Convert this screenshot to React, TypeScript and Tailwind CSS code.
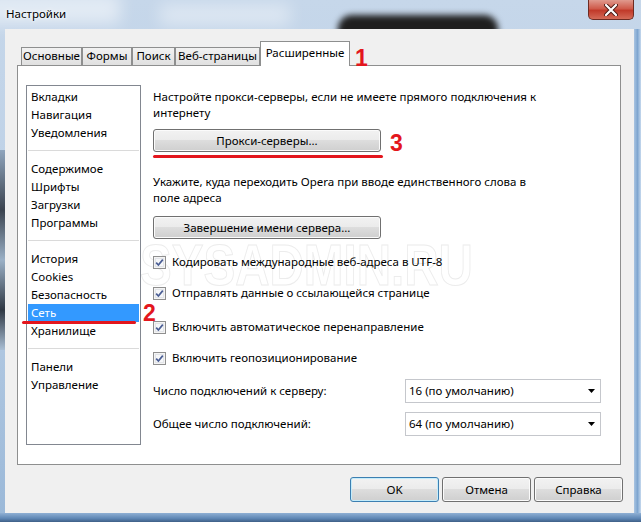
import React from "react"

const groups = [
  ["Вкладки", "Навигация", "Уведомления"],
  ["Содержимое", "Шрифты", "Загрузки", "Программы"],
  ["История", "Cookies", "Безопасность", "Сеть", "Хранилище"],
  ["Панели", "Управление"],
]

const tabs = [
  { label: "Основные", w: "w-[61px]" },
  { label: "Формы", w: "w-[50px]" },
  { label: "Поиск", w: "w-[43px]" },
  { label: "Веб-страницы", w: "w-[85px]" },
]

const checks = [
  { label: "Кодировать международные веб-адреса в UTF-8", mt: "mt-[15px]" },
  { label: "Отправлять данные о ссылающейся странице", mt: "mt-[15px]" },
  { label: "Включить автоматическое перенаправление", mt: "mt-[18px]" },
  { label: "Включить геопозиционирование", mt: "mt-[15px]" },
]

const winBtn =
  "flex items-center justify-center rounded-[3px] border bg-[linear-gradient(180deg,#f2f2f2_0%,#ebebeb_49%,#dddddd_50%,#cfcfcf_100%)]"

function CheckBox() {
  return (
    <svg width="13" height="13" viewBox="0 0 13 13" className="shrink-0">
      <rect x="0.5" y="0.5" width="12" height="12" fill="#f4f4f4" stroke="#8f8f8f" />
      <rect x="2" y="2" width="9" height="9" fill="#e2e4e8" />
      <rect x="3" y="3" width="7" height="7" fill="#f6f7f9" />
      <path d="M3.2 6.6 L5.4 9 L9.8 3.6" fill="none" stroke="#4a5d94" strokeWidth="1.7" />
    </svg>
  )
}

function Select({ value }: { value: string }) {
  return (
    <div className="flex h-[24px] w-[196px] items-center justify-between border border-[#c5c7cc] bg-white pl-[3px] pr-[4px]">
      <span>{value}</span>
      <svg width="8" height="5" viewBox="0 0 8 5">
        <path d="M0 0 H7 L3.5 4 Z" fill="#000" />
      </svg>
    </div>
  )
}

export default function App() {
  return (
    <div className="relative flex h-[522px] w-[641px] flex-col overflow-hidden bg-[linear-gradient(180deg,#c6d7ea_0%,#bcd0e6_45%,#9ab8d8_100%)] font-['Segoe_UI','Noto_Sans',sans-serif] text-[11.5px] text-black">
      {/* glass backdrop */}
      <div className="absolute left-[-20px] top-[-6px] h-[30px] w-[140px] bg-white/50 blur-[8px]" />
      <div className="absolute left-[160px] top-[4px] h-[22px] w-[130px] bg-white/40 blur-[8px]" />
      <div className="absolute left-[338px] top-[15px] h-[40px] w-[160px] rounded-[14px] bg-[#1f1f1f] blur-[3px]" />
      <div className="absolute left-[0px] top-[150px] h-[200px] w-[5px] bg-[linear-gradient(180deg,#8fa5bd,#3a434f_30%,#9ab0c6_55%,#2f3844_80%,#a9bed4)]" />

      {/* title bar */}
      <div className="relative flex h-[29px] shrink-0 items-center pl-[6px] pb-[1px]">
        <span className="[text-shadow:0_0_6px_#fff,0_0_3px_#fff]">Настройки</span>
        <div className="absolute right-[7px] top-0 flex h-[20px] w-[46px] items-center justify-center rounded-b-[5px] border border-t-0 border-[#6e2b22] bg-[linear-gradient(180deg,#e09a8e_0%,#cf5b4b_45%,#c13a2a_55%,#d46a57_100%)]">
          <svg width="14" height="12" viewBox="0 0 14 12">
            <path d="M2 1 L12 11 M12 1 L2 11" stroke="#4a1a14" strokeWidth="4" strokeLinecap="round" />
            <path d="M2 1 L12 11 M12 1 L2 11" stroke="#fff" strokeWidth="2.2" strokeLinecap="round" />
          </svg>
        </div>
      </div>

      <div className="relative flex flex-1">
        <div className="w-[5px]" />
        {/* client area */}
        <div className="flex h-[484px] w-[629px] flex-col bg-[#f0f0f0] pl-[12px] pt-[12px]">
          {/* tabs */}
          <div className="flex h-[24px] items-end pl-[4px]">
            {tabs.map((t) => (
              <div
                key={t.label}
                className={`${t.w} flex h-[18px] items-center justify-center border border-b-0 border-[#8e8f8f] bg-[linear-gradient(180deg,#f2f2f2,#e0e0e0)] pb-[1px]`}
              >
                {t.label}
              </div>
            ))}
            <div className="relative z-10 -mb-[1px] flex h-[25px] w-[90px] items-center justify-center border border-b-0 border-[#8e8f8f] bg-white pb-[2px]">
              Расширенные
            </div>
          </div>

          {/* tab panel */}
          <div className="relative flex h-[400px] w-[604px] border border-[#8e8f8f] bg-white pl-[8px] pt-[19px]">
            <div className="pointer-events-none absolute left-[122px] top-[170px] origin-left scale-x-[0.82] font-['Liberation_Sans',sans-serif] text-[58px] font-bold leading-none text-white [-webkit-text-stroke:1px_#ececec]">
              SYSADMIN.RU
            </div>

            {/* list */}
            <div className="relative h-[360px] w-[115px] shrink-0 border border-[#828790] bg-white pt-[2px]">
              {groups.map((g, gi) => (
                <div key={gi}>
                  {gi > 0 && <div className="mx-[1px] mb-[9px] mt-[8px] h-px bg-[#dadada]" />}
                  {g.map((item) =>
                    item === "Сеть" ? (
                      <div key={item} className="mx-[1px] h-[18px] bg-[#3399ff] pl-[3px] leading-[18px] text-white">
                        {item}
                      </div>
                    ) : (
                      <div key={item} className="h-[18px] pl-[4px] leading-[18px]">
                        {item}
                      </div>
                    )
                  )}
                </div>
              ))}
            </div>

            {/* settings column */}
            <div className="relative ml-[12px] flex w-[448px] flex-col pt-[4px]">
              <p className="leading-[16px]">
                Настройте прокси-серверы, если не имеете прямого подключения к
                <br />
                интернету
              </p>
              <div className={`${winBtn} mt-[8px] h-[23px] w-[228px] border-[#707070] shadow-[inset_0_0_0_1px_#fbfbfb]`}>
                Прокси-серверы...
              </div>
              <p className="mt-[22px] leading-[16px]">
                Укажите, куда переходить Opera при вводе единственного слова в
                <br />
                поле адреса
              </p>
              <div className={`${winBtn} mt-[10px] h-[23px] w-[228px] border-[#707070] shadow-[inset_0_0_0_1px_#fbfbfb]`}>
                Завершение имени сервера...
              </div>
              {checks.map((c) => (
                <div key={c.label} className={`${c.mt} flex h-[16px] items-center gap-[6px]`}>
                  <CheckBox />
                  <span>{c.label}</span>
                </div>
              ))}
              <div className="mt-[13px] flex items-center">
                <span className="w-[252px]">Число подключений к серверу:</span>
                <Select value="16 (по умолчанию)" />
              </div>
              <div className="mt-[9px] flex items-center">
                <span className="w-[252px]">Общее число подключений:</span>
                <Select value="64 (по умолчанию)" />
              </div>
            </div>
          </div>

          {/* dialog buttons */}
          <div className="mt-[12px] flex justify-end gap-[3px] pr-[11px]">
            <div className={`${winBtn} h-[25px] w-[89px] border-[#3c7fb1] shadow-[inset_0_0_0_1px_#c4ecfb]`}>OK</div>
            <div className={`${winBtn} h-[25px] w-[89px] border-[#707070] shadow-[inset_0_0_0_1px_#fbfbfb]`}>Отмена</div>
            <div className={`${winBtn} h-[25px] w-[89px] border-[#707070] shadow-[inset_0_0_0_1px_#fbfbfb]`}>Справка</div>
          </div>
        </div>
        <div className="w-[7px] bg-[linear-gradient(90deg,#a9c4e1,#7fa6d0_50%,#c6d9ee)]" />
      </div>
      <div className="h-[9px] shrink-0 bg-[linear-gradient(180deg,#8fb0d4,#5f87b5_60%,#3e5f86)]" />

      {/* red annotations */}
      <div className="absolute left-[265px] top-[62px] h-[3px] w-[84px] rounded-full bg-[#e3161d]" />
      <div className="absolute left-[355px] top-[47px] font-['Liberation_Sans',sans-serif] text-[23px] font-bold leading-none text-[#e3161d]">1</div>
      <div className="absolute left-[153px] top-[155px] h-[3px] w-[230px] rounded-full bg-[#e3161d]" />
      <div className="absolute left-[390px] top-[132px] font-['Liberation_Sans',sans-serif] text-[23px] font-bold leading-none text-[#e3161d]">3</div>
      <div className="absolute left-[22px] top-[321px] h-[3px] w-[114px] rounded-full bg-[#e3161d]" />
      <div className="absolute left-[143px] top-[302px] font-['Liberation_Sans',sans-serif] text-[23px] font-bold leading-none text-[#e3161d]">2</div>
    </div>
  )
}
